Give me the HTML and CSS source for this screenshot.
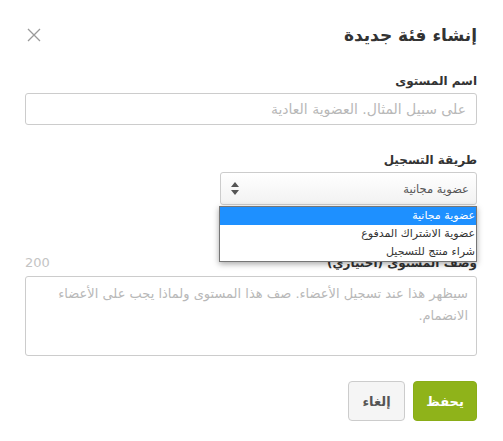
FILE: index.html
```html
<!DOCTYPE html>
<html lang="ar" dir="rtl">
<head>
    <meta charset="UTF-8">
    <meta name="viewport" content="width=device-width, initial-scale=1.0">
    <title>إنشاء فئة جديدة</title>
    <link rel="stylesheet" href="styles.css">
</head>
<body>
    <div class="modal">
        <div class="modal-header">
            <h2>إنشاء فئة جديدة</h2>
            <span class="close">
                <svg width="14" height="14" viewBox="0 0 14 14"><path d="M1 1 L13 13 M13 1 L1 13" stroke="#9a9a9a" stroke-width="1.3" fill="none"/></svg>
            </span>
        </div>

        <div class="field">
            <label>اسم المستوى</label>
            <input type="text" class="text-input" placeholder="على سبيل المثال. العضوية العادية">
        </div>

        <div class="field">
            <label>طريقة التسجيل</label>
            <div class="select-wrap">
                <div class="select-box">
                    <span>عضوية مجانية</span>
                    <svg class="arrows" width="8" height="13" viewBox="0 0 8 13"><path d="M4 0 L8 5 L0 5 Z M0 8 L8 8 L4 13 Z" fill="#555"/></svg>
                </div>
                <ul class="options">
                    <li class="selected">عضوية مجانية</li>
                    <li>عضوية الاشتراك المدفوع</li>
                    <li>شراء منتج للتسجيل</li>
                </ul>
            </div>
        </div>

        <div class="field field-desc">
            <div class="label-row">
                <label>وصف المستوى (اختياري)</label>
                <span class="counter">200</span>
            </div>
            <textarea class="text-area" placeholder="سيظهر هذا عند تسجيل الأعضاء. صف هذا المستوى ولماذا يجب على الأعضاء الانضمام."></textarea>
        </div>

        <div class="actions">
            <button class="btn btn-save">يحفظ</button>
            <button class="btn btn-cancel">إلغاء</button>
        </div>
    </div>
</body>
</html>
```

FILE: styles.css
```css
body {
    margin: 0;
    padding: 0;
    font-family: "DejaVu Sans", sans-serif;
    background: #fff;
    color: #333;
}

.modal {
    padding: 17px 26px 20px 25px;
}

.modal-header {
    display: flex;
    justify-content: space-between;
    align-items: center;
    height: 36px;
}

.modal-header h2 {
    margin: 0;
    font-size: 17px;
    font-weight: bold;
    color: #333;
}

.close {
    display: flex;
    margin-left: 2px;
}

.field {
    margin-top: 20px;
}

.field + .field {
    margin-top: 27px;
}

.field.field-desc {
    margin-top: 50px;
}

.field label {
    display: block;
    font-size: 12px;
    line-height: 16px;
    font-weight: bold;
    color: #333;
    margin-bottom: 4px;
}

.text-input {
    display: block;
    box-sizing: border-box;
    width: 100%;
    height: 32px;
    padding: 0 10px;
    border: 1px solid #ccc;
    border-radius: 3px;
    font-family: inherit;
    font-size: 14px;
    direction: rtl;
}

.text-input::placeholder,
.text-area::placeholder {
    color: #b8b8b8;
}

.select-wrap {
    position: relative;
    width: 257px;
}

.select-box {
    box-sizing: border-box;
    height: 33px;
    display: flex;
    justify-content: space-between;
    align-items: center;
    padding: 0 7px 0 10px;
    border: 1px solid #ccc;
    border-radius: 3px;
    background: linear-gradient(#fff, #f2f2f2);
    font-size: 11.5px;
    color: #555;
}

.options {
    position: absolute;
    top: 34px;
    right: 0;
    width: 258px;
    box-sizing: border-box;
    margin: 0;
    padding: 0;
    list-style: none;
    background: #fff;
    border: 1px solid #767676;
    box-shadow: 0 2px 6px rgba(0, 0, 0, 0.35);
    font-size: 11px;
    color: #333;
    z-index: 2;
}

.options li {
    height: 18px;
    line-height: 18px;
    padding: 0 1px;
}

.options li.selected {
    background: #1e90ff;
    color: #fff;
}

.label-row {
    display: flex;
    justify-content: space-between;
    align-items: flex-end;
    margin-bottom: 5px;
}

.label-row label {
    margin-bottom: 0;
}

.counter {
    font-size: 13px;
    line-height: 16px;
    color: #c4c4c4;
}

.text-area {
    display: block;
    box-sizing: border-box;
    width: 100%;
    height: 80px;
    padding: 6px 8px;
    border: 1px solid #ccc;
    border-radius: 3px;
    font-family: inherit;
    font-size: 13px;
    line-height: 22px;
    resize: none;
    direction: rtl;
}

.actions {
    display: flex;
    gap: 8px;
    margin-top: 25px;
}

.btn {
    height: 40px;
    border-radius: 4px;
    font-family: inherit;
    font-size: 13px;
    font-weight: bold;
    cursor: pointer;
}

.btn-save {
    width: 64px;
    background: #8fb31a;
    border: 1px solid #8aad17;
    color: #fff;
}

.btn-cancel {
    width: 57px;
    background: #f5f5f5;
    border: 1px solid #ccc;
    color: #555;
}
```
